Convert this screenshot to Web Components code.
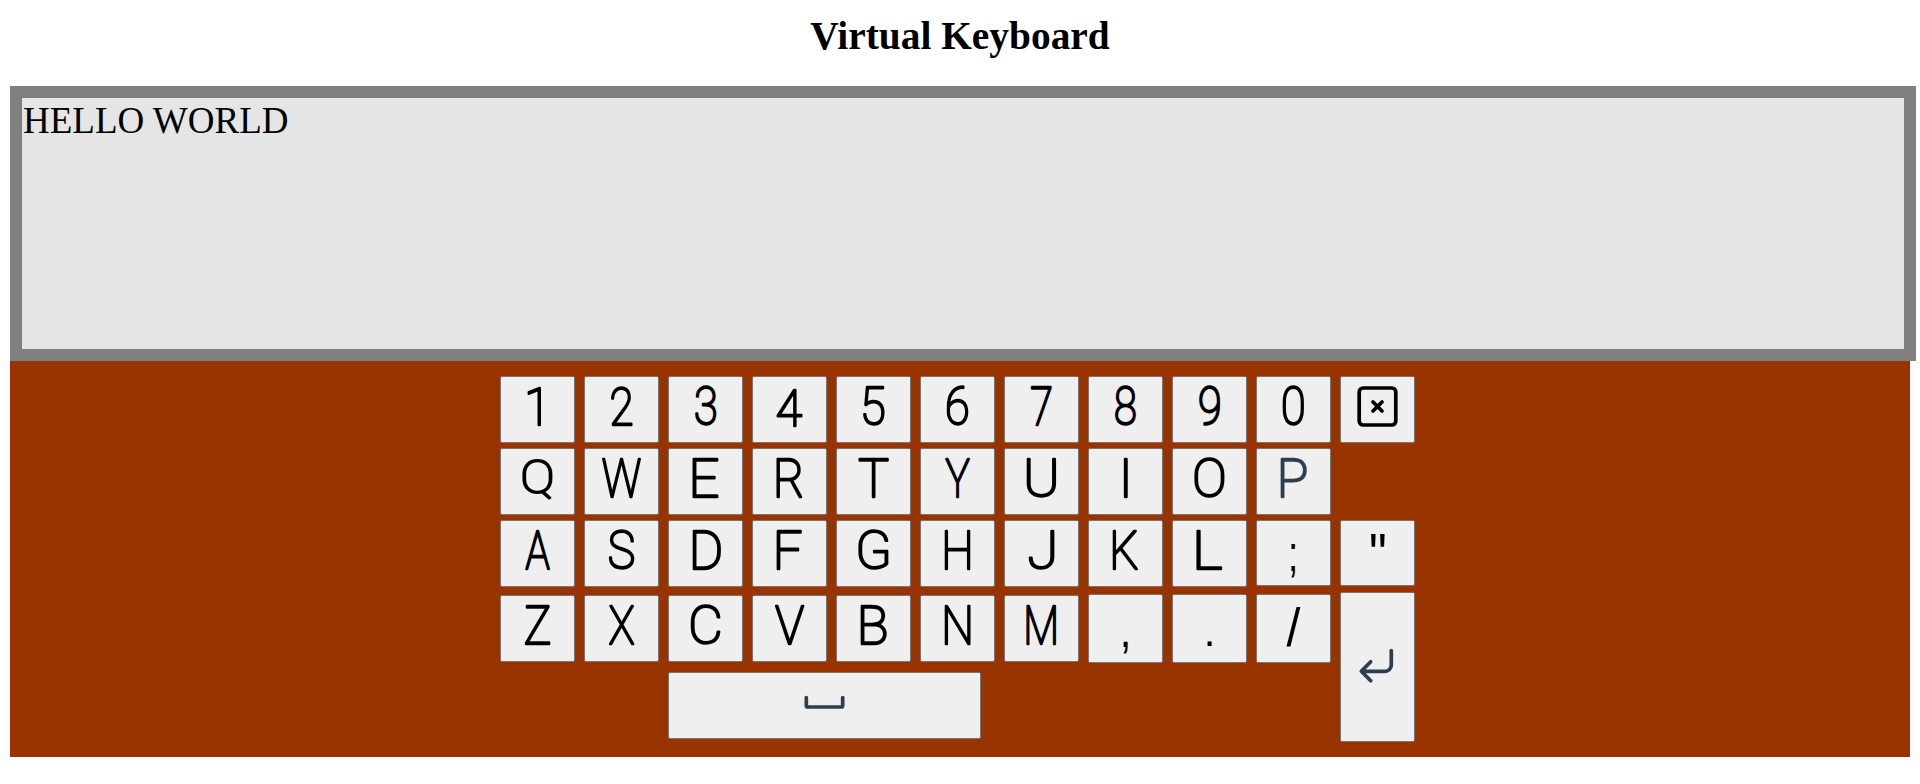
<!DOCTYPE html>
<html lang="en">
<head>
<meta charset="utf-8">
<title>Virtual Keyboard</title>
<style>
body { margin: 0; background: #fff; color: #000; font-family: "Liberation Serif", "Times New Roman", serif; }
</style>
</head>
<body>
<keyboard-app></keyboard-app>
<script>
class KeyCap extends HTMLElement {
  connectedCallback() {
    const w = +this.getAttribute('w') || 75, h = +this.getAttribute('h') || 67;
    const root = this.attachShadow({ mode: 'open' });
    root.innerHTML = `<style>
      :host { display: block; width: ${w}px; height: ${h}px; }
      button { display: block; box-sizing: border-box; width: 100%; height: 100%; margin: 0; padding: 0;
        border: 1px solid #767676; border-radius: 2px; background: #efefef; color: inherit; overflow: visible; }
      svg { display: block; margin: -1px; overflow: visible; }
      .icon { fill: none; stroke: currentColor; stroke-width: 3.7; stroke-linecap: round; stroke-linejoin: round; }
      text { fill: currentColor; }
      .round { stroke: currentColor; stroke-width: 2.5px; stroke-linecap: round; stroke-linejoin: round; }
    </style><button type="button"><svg width="${w}" height="${h}" viewBox="0 0 ${w} ${h}"></svg></button>`;
    const svg = root.querySelector('svg');
    const icon = this.getAttribute('icon');
    if (icon) {
      svg.setAttribute('class', 'icon');
      svg.innerHTML = KeyCap.icons[icon];
      return;
    }
    // Scale the label so its ink fills the box [x0, x1, y0, y1] of the key.
    const label = this.getAttribute('label');
    let [x0, x1, y0, y1] = this.getAttribute('box').split(',').map(Number);
    const symbol = this.hasAttribute('symbol');
    const family = symbol ? '"Liberation Sans", Arial, sans-serif' : 'Roboto, sans-serif';
    const weight = symbol ? 400 : 100, size = symbol ? 50 : 54;
    if (!symbol) { x0 += 1.2; x1 -= 1.2; y0 += 1.2; y1 -= 1.2; }
    const ctx = KeyCap.ctx;
    ctx.font = `${weight} ${size}px ${family}`;
    const m = ctx.measureText(label);
    const sx = label === 'I' ? 1 : (x1 - x0) / (m.actualBoundingBoxLeft + m.actualBoundingBoxRight);
    const sy = (y1 - y0) / (m.actualBoundingBoxAscent + m.actualBoundingBoxDescent);
    const t = document.createElementNS('http://www.w3.org/2000/svg', 'text');
    t.textContent = label;
    if (!symbol) t.setAttribute('class', 'round');
    t.setAttribute('style', `font: ${weight} ${size}px ${family}`);
    t.setAttribute('transform', `translate(${x0 + m.actualBoundingBoxLeft * sx} ${y0 + m.actualBoundingBoxAscent * sy}) scale(${sx} ${sy})`);
    svg.append(t);
  }
}
KeyCap.ctx = document.createElement('canvas').getContext('2d');
KeyCap.icons = {
  erase: '<rect x="19.2" y="12" width="36.6" height="37" rx="4"/><path d="M33 26l9 9M42 26l-9 9"/>',
  enter: '<path d="M51.3 58.5V73a6.3 6.3 0 0 1-6.3 6.3H21.5M30.7 69.8l-9.4 9.5 9.4 9.5"/>',
  space: '<path d="M138.3 25.5V33.5a1.5 1.5 0 0 0 1.5 1.5H173.2a1.5 1.5 0 0 0 1.5-1.5V25.5"/>'
};
customElements.define('key-cap', KeyCap);

class TextScreen extends HTMLElement {
  constructor() {
    super();
    this.attachShadow({ mode: 'open' }).innerHTML = `<style>
      :host { display: block; box-sizing: border-box; width: 1906px; height: 275px; padding: 1px 0 0 1px;
        border: 12px solid #808080; background: #e5e5e5; font-size: 37px; line-height: 43px; }
    </style><slot></slot>`;
  }
}
customElements.define('text-screen', TextScreen);

class KeyPanel extends HTMLElement {
  constructor() {
    super();
    const N = [24.3, 50.7], W = [22, 53], D = [26.3, 48.7];
    const rows = [
      [['1', 26.7, 41.7], ['2', 26.7, 48.7], ['3', ...D], ['4', 24.3, 50.7, 12.7, 50.7], ['5', ...D], ['6', ...D], ['7', 26.7, 48.3], ['8', ...D], ['9', ...D], ['0', ...D]],
      [['Q', 22, 53, 10, 52], ['W', 17.3, 57.7], ['E', ...N], ['R', ...N], ['T', ...W], ['Y', ...N], ['U', ...W], ['I', 35.5, 39.5], ['O', ...W], ['P', 24.3, 51]],
      [['A', ...N], ['S', ...N], ['D', 24.3, 53], ['F', ...N], ['G', ...W], ['H', ...N], ['J', ...N], ['K', ...N], ['L', ...N]],
      [['Z', ...N], ['X', ...N], ['C', ...W], ['V', ...W], ['B', 24.3, 51], ['N', ...N], ['M', ...W]]
    ];
    let keys = '';
    rows.forEach((row, r) => row.forEach(([c, x0, x1, y0 = 10.2, y1 = 50.6], i) => {
      const blue = c === 'P' ? ' class="blue"' : '';
      keys += `<key-cap${blue} label="${c}" box="${x0},${x1},${y0},${y1}" style="grid-area:${r + 1}/${i + 1};${r === 3 ? 'margin-top:3px' : ''}"></key-cap>`;
    }));
    this.attachShadow({ mode: 'open' }).innerHTML = `<style>
      :host { display: grid; box-sizing: border-box; width: 1900px; height: 396px; padding: 15px 5px 0 0;
        background: #993300; grid-template-columns: repeat(11, 75px); column-gap: 9px;
        grid-template-rows: 72px 72px 72px 80px 70px; justify-content: center; align-content: start; align-items: start; }
      .blue { color: #2c3e50; }
      .low { margin-top: 2px; }
    </style>${keys}
      <key-cap icon="erase" style="grid-area:1/11"></key-cap>
      <key-cap symbol label=";" h="66" box="35,39.4,24,58" style="grid-area:3/10"></key-cap>
      <key-cap symbol label="&quot;" h="66" box="31,45,14,27" style="grid-area:3/11"></key-cap>
      <key-cap symbol class="low" label="," h="69" box="35,40,47,60" style="grid-area:4/8"></key-cap>
      <key-cap symbol class="low" label="." h="69" box="35,40,47,52" style="grid-area:4/9"></key-cap>
      <key-cap symbol class="low" label="/" h="69" box="30.5,44.5,14,52" style="grid-area:4/10"></key-cap>
      <key-cap class="blue" icon="enter" h="150" style="grid-area:4/11/6/12"></key-cap>
      <key-cap class="blue" icon="space" w="313" style="grid-area:5/3/6/7"></key-cap>`;
  }
}
customElements.define('key-panel', KeyPanel);

class KeyboardApp extends HTMLElement {
  constructor() {
    super();
    this.attachShadow({ mode: 'open' }).innerHTML = `<style>
      :host { display: block; width: 1900px; padding: 13px 10px 0; }
      h1 { margin: 0; height: 73px; font-size: 39.4px; line-height: 46px; font-weight: bold; text-align: center; }
    </style>
    <h1>Virtual Keyboard</h1>
    <text-screen>HELLO WORLD</text-screen>
    <key-panel></key-panel>`;
  }
}
customElements.define('keyboard-app', KeyboardApp);
</script>
</body>
</html>
